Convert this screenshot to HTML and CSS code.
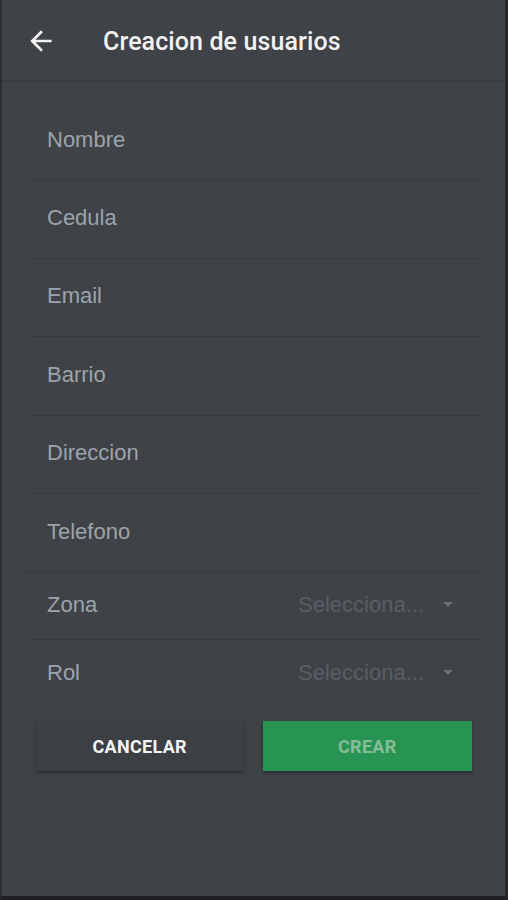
FILE: index.html
```html
<!DOCTYPE html>
<html lang="es">
<head>
<meta charset="utf-8">
<title>Creacion de usuarios</title>
<link rel="stylesheet" href="styles.css">
</head>
<body>
<div class="frame">
  <header class="topbar">
    <svg class="back" width="32" height="32" viewBox="0 0 24 24"><path d="M20 11H7.83l5.59-5.59L12 4l-8 8 8 8 1.41-1.41L7.83 13H20v-2z" fill="#f2f2f2"/></svg>
    <h1 class="title">Creacion de usuarios</h1>
  </header>
  <main class="form">
    <div class="row"><span class="label">Nombre</span></div>
    <div class="row"><span class="label">Cedula</span></div>
    <div class="row"><span class="label">Email</span></div>
    <div class="row"><span class="label">Barrio</span></div>
    <div class="row"><span class="label">Direccion</span></div>
    <div class="row wide"><span class="label">Telefono</span></div>
    <div class="row select"><span class="label">Zona</span><span class="picker">Selecciona...<span class="caret"></span></span></div>
    <div class="row select last"><span class="label">Rol</span><span class="picker">Selecciona...<span class="caret"></span></span></div>
    <div class="actions">
      <button class="btn cancel">CANCELAR</button>
      <button class="btn create">CREAR</button>
    </div>
  </main>
</div>
</body>
</html>
```
FILE: styles.css
```css
html, body { margin: 0; padding: 0; background: #232428; }
.frame {
  box-sizing: border-box;
  height: 900px;
  background: #3f4247;
  border-left: 2px solid #2a2c30;
  border-right: 3px solid #26282c;
  border-bottom: 4px solid #1f2023;
  display: flex;
  flex-direction: column;
}
.topbar {
  height: 80px;
  flex: none;
  display: flex;
  align-items: center;
  padding-left: 23px;
  border-bottom: 2px solid #383b40;
}
.back { flex: none; margin-top: 1px; }
.title {
  margin: 2px 0 0 46px;
  font-family: Roboto, "Liberation Sans", sans-serif;
  font-weight: 500;
  font-size: 25px;
  color: #f2f2f2;
  letter-spacing: 0.1px;
}
.form {
  padding: 20px 24px 0 26px;
  display: flex;
  flex-direction: column;
}
.row {
  box-sizing: content-box;
  height: 75.4px;
  padding-bottom: 2px;
  border-bottom: 1px solid #373a3f;
  display: flex;
  align-items: center;
  padding-left: 19px;
}
.row.wide { margin-left: -3px; margin-right: -2px; padding-left: 22px; }
.label {
  font-family: "Liberation Sans", Arial, sans-serif;
  font-size: 22px;
  color: #9ca4ab;
}
.row.select { height: 65px; justify-content: space-between; padding-right: 28px; }
.row.last { border-bottom: none; }
.picker {
  font-family: "Liberation Sans", Arial, sans-serif;
  font-size: 22px;
  color: #5a5e65;
  display: flex;
  align-items: center;
}
.caret {
  width: 0; height: 0;
  margin-left: 19px;
  border-left: 5px solid transparent;
  border-right: 5px solid transparent;
  border-top: 5px solid #6c7076;
}
.actions {
  display: flex;
  gap: 19px;
  margin: 14px 9px 0 8px;
}
.btn {
  height: 50px;
  border: none;
  font-family: Roboto, "Liberation Sans", sans-serif;
  font-weight: 700;
  font-size: 18px;
  letter-spacing: 0.3px;
  padding: 0;
}
.cancel {
  width: 208px;
  background: #3c3f44;
  color: #f4f4f4;
  box-shadow: 0 2px 3px rgba(0,0,0,0.35);
}
.create {
  width: 210px;
  background: #289454;
  color: #85bd98;
  box-shadow: 0 2px 3px rgba(0,0,0,0.3);
}
```
